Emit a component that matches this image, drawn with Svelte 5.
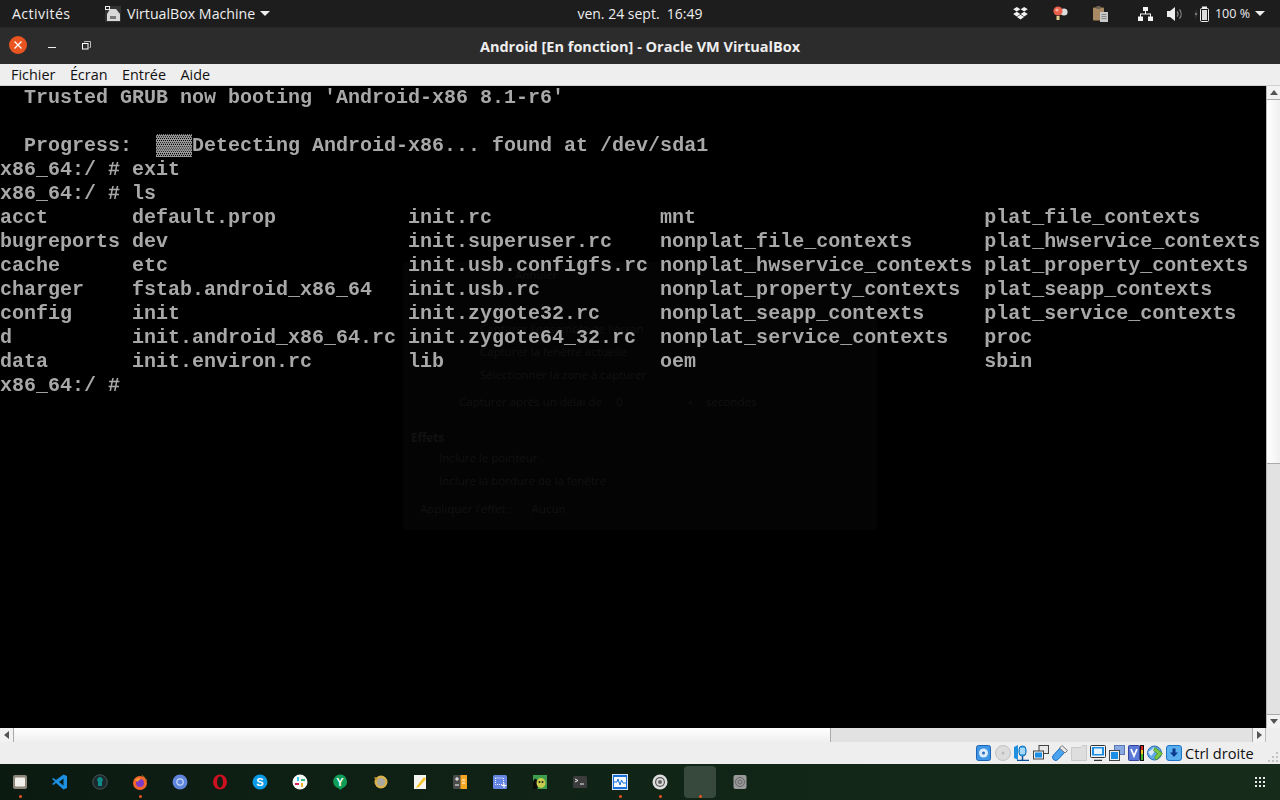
<script>
  const columns = [11, 34, 55, 82];
  const listing = [
    ["acct", "default.prop", "init.rc", "mnt", "plat_file_contexts"],
    ["bugreports", "dev", "init.superuser.rc", "nonplat_file_contexts", "plat_hwservice_contexts"],
    ["cache", "etc", "init.usb.configfs.rc", "nonplat_hwservice_contexts", "plat_property_contexts"],
    ["charger", "fstab.android_x86_64", "init.usb.rc", "nonplat_property_contexts", "plat_seapp_contexts"],
    ["config", "init", "init.zygote32.rc", "nonplat_seapp_contexts", "plat_service_contexts"],
    ["d", "init.android_x86_64.rc", "init.zygote64_32.rc", "nonplat_service_contexts", "proc"],
    ["data", "init.environ.rc", "lib", "oem", "sbin"],
  ];
  // ls pads to fixed columns on the 12px text grid
  const rows = listing.map((names) => {
    let out = "";
    names.forEach((name, i) => {
      out += i < columns.length ? name.padEnd(columns[i] - out.length) : name;
    });
    return out;
  });
  const menus = ["Fichier", "Écran", "Entrée", "Aide"];
</script>

<div class="screen">
  <header class="topbar">
    <div class="top-left">
      <span class="activities">Activités</span>
      <svg class="appicon" width="16" height="16" viewBox="0 0 16 16">
        <rect x="0" y="0" width="16" height="16" fill="#333" />
        <path d="M5 3h6l4 5v7H2V8z" fill="#d8d8d8" />
        <rect x="0" y="0" width="5" height="4" fill="#eee" />
        <rect x="1" y="1" width="3" height="2" fill="#222" />
        <rect x="5" y="10" width="6" height="3" fill="#777" />
      </svg>
      <span class="appname">VirtualBox Machine</span>
      <span class="caret"></span>
    </div>
    <div class="clock">ven. 24 sept.&nbsp;&nbsp;16:49</div>
    <div class="tray">
      <svg width="15" height="13" viewBox="0 0 15 13" fill="#f2f2f2">
        <path d="M3.8 0 7.4 2.3 3.8 4.6 0.2 2.3zM11.2 0l3.6 2.3-3.6 2.3-3.6-2.3zM3.8 4.8l3.6 2.3-3.6 2.3L.2 7.1zM11.2 4.8l3.6 2.3-3.6 2.3-3.6-2.3zM3.9 10l3.6-2.2 3.6 2.2-3.6 2.6z" />
      </svg>
      <svg class="t-bulb" width="15" height="16" viewBox="0 0 15 16">
        <circle cx="11" cy="6" r="3.6" fill="#ddd" />
        <circle cx="5" cy="5" r="4.6" fill="#e8604a" />
        <circle cx="4" cy="4" r="1.6" fill="#f5b09c" />
        <rect x="3.5" y="10" width="3" height="4" fill="#e3cf90" />
      </svg>
      <svg class="t-clip" width="15" height="16" viewBox="0 0 15 16">
        <rect x="0" y="1.5" width="11" height="13" rx="1" fill="#a98a62" />
        <rect x="3.5" y="0" width="4" height="3" fill="#6e6253" />
        <rect x="7" y="6" width="8" height="10" fill="#c8c8c8" />
        <path d="M8.5 8.5h5M8.5 10.5h5M8.5 12.5h5" stroke="#888" />
      </svg>
      <svg class="t-net" width="15" height="14" viewBox="0 0 15 14" fill="#f4f4f4">
        <rect x="5" y="0" width="5" height="4" />
        <rect x="0" y="9.5" width="5" height="4.5" />
        <rect x="10" y="9.5" width="5" height="4.5" />
        <path d="M7 4h1v2.500h5V10h-1V7.500H3V10H2V6.500h5z" />
      </svg>
      <svg class="t-vol" width="15" height="14" viewBox="0 0 15 14" fill="none">
        <path d="M0 4h3l5-4v14l-5-4H0z" fill="#eee" />
        <path d="M10 4.500a3.500 3.500 0 0 1 0 5M12.500 2.500a7 7 0 0 1 0 9" stroke="#888" stroke-width="1.200" />
      </svg>
      <svg class="t-bat" width="15" height="16" viewBox="0 0 15 16">
        <path d="M3 3 0.500 9h1.500L1 13l2.500-6H2z" fill="#777" />
        <rect x="6.500" y="2.500" width="8" height="13" rx="1" fill="none" stroke="#eee" />
        <rect x="8" y="0.500" width="5" height="2" fill="#eee" />
        <rect x="8" y="4" width="5" height="10" fill="#ddd" />
      </svg>
      <span class="pct">100 %</span>
      <span class="caret"></span>
    </div>
  </header>

  <div class="titlebar">
    <div class="winbtns">
      <span class="close">
        <svg width="10" height="10" viewBox="0 0 10 10"><path d="M1.500 1.500l7 7M8.500 1.500l-7 7" stroke="#fff" stroke-width="1.300" /></svg>
      </span>
      <span class="min"></span>
      <svg class="restore" width="9" height="9" viewBox="0 0 9 9" fill="none">
        <path d="M2.500 1.500V.500h6v6h-1" stroke="#bbb" />
        <rect x=".5" y="2.500" width="5.500" height="5.500" stroke="#fff" />
      </svg>
    </div>
    <div class="wintitle">Android [En fonction] - Oracle VM VirtualBox</div>
  </div>

  <nav class="menubar">
    {#each menus as m}
      <span>{m}</span>
    {/each}
  </nav>

  <div class="vm">
    <div class="vmrow">
      <div class="terminal">
        <div class="ghost">
          <div class="g-annuler">Annuler</div>
          <div class="g-opt">Capturer l'ensemble de l'écran</div>
          <div class="g-opt">Capturer la fenêtre actuelle</div>
          <div class="g-opt">Sélectionner la zone à capturer</div>
          <div class="g-delay"><span class="g-label">Capturer après un délai de</span><span class="g-zero">0</span><span class="g-plus">+</span><span>secondes</span></div>
          <div class="g-head">Effets</div>
          <div class="g-check">Inclure le pointeur</div>
          <div class="g-check">Inclure la bordure de la fenêtre</div>
          <div class="g-effect"><span>Appliquer l'effet :</span><span class="g-select">Aucun</span></div>
        </div>
        <pre class="term">  Trusted GRUB now booting 'Android-x86 8.1-r6'

  Progress:  <span class="shade">▓▓▓</span>Detecting Android-x86... found at /dev/sda1
x86_64:/ # exit
x86_64:/ # ls
{#each rows as row}{row}
{/each}x86_64:/ #</pre>
      </div>
      <div class="vscroll">
        <div class="sbtn"><span class="arrow up"></span></div>
        <div class="vthumb"></div>
        <div class="vtrack"></div>
        <div class="sbtn bottom"><span class="arrow down"></span></div>
      </div>
    </div>
    <div class="hscroll">
      <div class="hbtn"><span class="arrow left"></span></div>
      <div class="hthumb"></div>
      <div class="htrack"></div>
      <div class="hbtn rt"><span class="arrow right"></span></div>
      <div class="corner"></div>
    </div>
    <div class="status">
      <svg width="16" height="16" viewBox="0 0 16 16"><rect x=".5" y=".5" width="14" height="15" rx="2" fill="#3f96e6" stroke="#1e64b4" /><circle cx="7.500" cy="8" r="4.500" fill="#dcecfa" /><circle cx="7.500" cy="8" r="1.500" fill="#2a6fbe" /></svg>
      <svg width="16" height="16" viewBox="0 0 16 16"><circle cx="8" cy="8" r="7.500" fill="#dcdcdc" stroke="#c2c2c2" /><circle cx="8" cy="8" r="1.500" fill="#bbb" /></svg>
      <svg width="16" height="16" viewBox="0 0 16 16"><path d="M0 2l4-2v15l-4-2z" fill="#1f8fe0" /><rect x="5" y="1" width="7" height="10" rx="3.500" fill="#4fb0ee" stroke="#0b6cbc" /><path d="M6 4h5M6 6h5M6 8h5" stroke="#fff" /><path d="M3 15.500h12M8.500 11v4" stroke="#0b4f98" stroke-width="1.500" /></svg>
      <svg width="16" height="16" viewBox="0 0 16 16"><rect x="6" y=".5" width="9.500" height="8" fill="#e8e8e8" stroke="#444" /><rect x=".5" y="6" width="10" height="8" fill="#eee" stroke="#444" /><rect x="2" y="7.500" width="7" height="5" fill="#1b8ee6" /></svg>
      <svg width="16" height="16" viewBox="0 0 16 16"><path d="M9 2 1.500 10a3 3 0 0 0 4.500 4.500L13 7z" fill="#49a3ee" stroke="#1a6cc0" /><path d="M10 0.500 15.500 5.500 13 8 7.500 3z" fill="#e8e8e8" stroke="#777" /></svg>
      <svg width="16" height="16" viewBox="0 0 16 16"><path d="M.5 2.500h9l2-2h4v15H.5z" fill="#dedede" stroke="#cacaca" /></svg>
      <svg width="16" height="16" viewBox="0 0 16 16"><rect x=".5" y=".5" width="15" height="12" rx="1" fill="#f2f2f2" stroke="#333" /><rect x="2" y="2" width="12" height="8.500" fill="#1b8ee6" /><rect x="4" y="3.500" width="8" height="5.500" fill="#e6f3fd" /><path d="M4 15.500h8" stroke="#333" stroke-width="1.500" /></svg>
      <svg width="16" height="16" viewBox="0 0 16 16"><rect x="5.500" y=".5" width="10" height="9" fill="#8aa9e0" stroke="#5a78b8" /><rect x=".5" y="5.500" width="10" height="10" fill="#eee" stroke="#444" /><rect x="2" y="7" width="7" height="7" fill="#1b8ee6" /></svg>
      <svg width="16" height="16" viewBox="0 0 16 16"><rect x=".5" y=".5" width="11" height="15" rx="1" fill="#5a78d8" stroke="#33449a" /><path d="M3 4l3 7 3-7" fill="none" stroke="#fff" stroke-width="1.800" /><rect x="12" y="0" width="4" height="16" fill="#111" /><rect x="13" y="1" width="2" height="4" fill="#e0261c" /><rect x="13" y="5" width="2" height="4" fill="#f2c81c" /><rect x="13" y="9" width="2" height="6" fill="#46b82c" /></svg>
      <svg width="16" height="16" viewBox="0 0 16 16"><circle cx="7.500" cy="8" r="7" fill="#5fa8e8" stroke="#2b6cb4" /><path d="M1 7c3-2 5-3 6-5 2 3 0 6-3 9z" fill="#d5e7f8" /><path d="M8 2.500l7.500 6-6 6.500-2-2.500 3-4-4-3z" fill="#7ac843" stroke="#4b8f22" stroke-width=".8" /></svg>
      <svg width="16" height="16" viewBox="0 0 16 16"><rect x=".5" y=".5" width="15" height="15" rx="2.500" fill="#5ab0ef" stroke="#1f74c4" /><path d="M6.500 3.500h3v4h2.500L8 12 4 7.500h2.500z" fill="#0c3a8c" /></svg>
      <span class="hostkey">Ctrl droite</span>
      <svg class="grip" width="12" height="12" viewBox="0 0 12 12" fill="#c2c2c2"><rect x="9" y="1" width="2" height="2" /><rect x="5" y="5" width="2" height="2" /><rect x="9" y="5" width="2" height="2" /><rect x="1" y="9" width="2" height="2" /><rect x="5" y="9" width="2" height="2" /><rect x="9" y="9" width="2" height="2" /></svg>
    </div>
  </div>

  <footer class="dock">
    <div class="dockitem running">
      <svg width="16" height="16" viewBox="0 0 16 16"><rect x="1" y="1" width="14" height="14" rx="2" fill="#8d8779" /><rect x="3" y="3.500" width="10" height="9" rx="1" fill="#f1f0eb" /></svg>
    </div>
    <div class="dockitem">
      <svg width="16" height="16" viewBox="0 0 16 16"><path d="M11.500 .500 15 2v12l-3.500 1.500L4 9l-2.500 2L0 10l3-2.500L0 5l1.500-1 2.500 2zM11.500 4.500 7 8l4.500 3.500z" fill="#1d8fe0" /></svg>
    </div>
    <div class="dockitem">
      <svg width="16" height="16" viewBox="0 0 16 16"><circle cx="8" cy="8" r="7.200" fill="#1a2a2c" stroke="#4a5658" /><path d="M8 3a2.800 2.800 0 0 1 2 4.800V12H6V7.800A2.800 2.800 0 0 1 8 3z" fill="#0f8a86" /></svg>
    </div>
    <div class="dockitem running">
      <svg width="16" height="16" viewBox="0 0 16 16"><circle cx="8" cy="9" r="7" fill="#f5652b" /><path d="M9 .500c3 1.500 5 3.500 6 7 0-2-1-3-2-3.500z" fill="#ffc02f" /><circle cx="8" cy="9" r="4" fill="#7b3bc7" /><path d="M3 6c2-2 5-2 6-1-1 1-3 1-3 3z" fill="#ff9a2a" /></svg>
    </div>
    <div class="dockitem">
      <svg width="16" height="16" viewBox="0 0 16 16"><circle cx="8" cy="8" r="7.500" fill="#5f86dc" /><circle cx="8" cy="8" r="3.200" fill="none" stroke="#c9d9f7" stroke-width="1.200" /></svg>
    </div>
    <div class="dockitem">
      <svg width="16" height="16" viewBox="0 0 16 16"><ellipse cx="8" cy="8" rx="7" ry="7.500" fill="#cf1020" /><ellipse cx="8" cy="8" rx="3" ry="5.800" fill="#111f14" /></svg>
    </div>
    <div class="dockitem">
      <svg width="16" height="16" viewBox="0 0 16 16"><circle cx="8" cy="8" r="7.500" fill="#0a9ae6" /><text x="8" y="12" class="dockglyph">S</text></svg>
    </div>
    <div class="dockitem">
      <svg width="16" height="16" viewBox="0 0 16 16"><circle cx="8" cy="8" r="7.500" fill="#f8f8f8" /><path d="M6 3v4" stroke="#36c5f0" stroke-width="2" /><path d="M10 9v4" stroke="#ecb22e" stroke-width="2" /><path d="M3 10h4" stroke="#e01e5a" stroke-width="2" /><path d="M9 6h4" stroke="#2eb67d" stroke-width="2" /></svg>
    </div>
    <div class="dockitem">
      <svg width="16" height="16" viewBox="0 0 16 16"><path d="M8 .500a7 7 0 0 1 3.500 13L8 16l-1-1.600A7 7 0 0 1 8 .500z" fill="#109d58" /><text x="8" y="11.500" class="dockglyph">Y</text></svg>
    </div>
    <div class="dockitem">
      <svg width="16" height="16" viewBox="0 0 16 16"><circle cx="9" cy="8" r="6.500" fill="#d9b24c" /><circle cx="9" cy="8" r="4" fill="#a9a9a0" /><path d="M2 3l4 1-2 3z" fill="#c79a2c" /></svg>
    </div>
    <div class="dockitem">
      <svg width="16" height="16" viewBox="0 0 16 16"><rect x="2" y="1" width="12" height="14" fill="#f4f4f0" /><path d="M5 12 12 3l2 2-7 8-3 1z" fill="#f3c62a" /></svg>
    </div>
    <div class="dockitem">
      <svg width="16" height="16" viewBox="0 0 16 16"><rect x="1" y="1" width="14" height="14" rx="1.500" fill="#4b4b4b" /><rect x="8.500" y="1" width="6.500" height="14" fill="#f5a623" /><path d="M3 5h4M5 3v4M3 11h4M10 6h3M10 9h3" stroke="#fff" /></svg>
    </div>
    <div class="dockitem">
      <svg width="16" height="16" viewBox="0 0 16 16"><rect x="1" y="1" width="14" height="14" rx="1.500" fill="#6486e2" /><rect x="3.500" y="4" width="8" height="6.500" fill="none" stroke="#fff" stroke-dasharray="1 1" /><path d="M12 9v5M9.500 11.500h5" stroke="#fff" /></svg>
    </div>
    <div class="dockitem">
      <svg width="16" height="16" viewBox="0 0 16 16"><rect x="1" y="1" width="14" height="14" fill="#3f9e4d" /><path d="M1 15V8c1-4 3-4 4-2s1 9 0 9z" fill="#0c0c0c" /><ellipse cx="9" cy="9" rx="4.500" ry="5" fill="#c7cc4c" /><circle cx="7.500" cy="8" r="1" fill="#222" /><circle cx="10.500" cy="8" r="1" fill="#222" /></svg>
    </div>
    <div class="dockitem">
      <svg width="16" height="16" viewBox="0 0 16 16"><rect x="1" y="2" width="14" height="12" rx="1.500" fill="#3c3c3c" /><path d="M3 5l3 1.500L3 8M8 10h4" stroke="#eee" fill="none" /></svg>
    </div>
    <div class="dockitem running">
      <svg width="16" height="16" viewBox="0 0 16 16"><rect x=".5" y=".5" width="15" height="15" fill="#1670d8" stroke="#cfe0f8" /><rect x="2" y="3" width="12" height="10" fill="#f4f8fe" /><path d="M2 8h3l1-3 2 6 1.500-5L11 9h3" fill="none" stroke="#1670d8" /></svg>
    </div>
    <div class="dockitem running">
      <svg width="16" height="16" viewBox="0 0 16 16"><circle cx="8" cy="8" r="7.500" fill="#dedede" /><circle cx="8" cy="8" r="5" fill="#555" /><circle cx="8" cy="8" r="3.800" fill="#ddd" /><circle cx="8" cy="8" r="2" fill="#666" /></svg>
    </div>
    <div class="dockitem running active"></div>
    <div class="dockitem">
      <svg width="16" height="16" viewBox="0 0 16 16"><rect x="1.500" y="1" width="13" height="14" rx="2" fill="#9a9a9a" /><circle cx="8" cy="8" r="4.500" fill="none" stroke="#666" /><circle cx="8" cy="8" r="2" fill="none" stroke="#666" /></svg>
    </div>
    <div class="apps">
      <svg width="10" height="10" viewBox="0 0 10 10" fill="#e8e8e8"><rect width="2" height="2" /><rect x="4" width="2" height="2" /><rect x="8" width="2" height="2" /><rect y="4" width="2" height="2" /><rect x="4" y="4" width="2" height="2" /><rect x="8" y="4" width="2" height="2" /><rect y="8" width="2" height="2" /><rect x="4" y="8" width="2" height="2" /><rect x="8" y="8" width="2" height="2" /></svg>
    </div>
  </footer>
</div>

<style>
  :global(body) {
    margin: 0;
    background: #000;
  }
  .screen {
    width: 1280px;
    height: 800px;
    display: flex;
    flex-direction: column;
    overflow: hidden;
    font-family: "Open Sans", "Noto Sans", sans-serif;
  }

  /* gnome top bar */
  .topbar {
    height: 27px;
    flex: none;
    background: #1d1d1d;
    color: #eee;
    font-size: 14.2px;
    display: grid;
    grid-template-columns: 1fr auto 1fr;
    align-items: center;
  }
  .top-left {
    display: flex;
    align-items: center;
    padding-left: 12px;
  }
  .activities {
    width: 93px;
    letter-spacing: 0.4px;
  }
  .appname {
    margin-left: 6px;
  }
  .appicon {
    flex: none;
  }
  .caret {
    width: 0;
    height: 0;
    margin-left: 5px;
    border-left: 5px solid transparent;
    border-right: 5px solid transparent;
    border-top: 5px solid #eee;
  }
  .clock {
    font-size: 14px;
  }
  .tray {
    display: flex;
    align-items: center;
    justify-content: flex-end;
    padding-right: 15px;
  }
  .tray svg {
    flex: none;
  }
  .t-bulb,
  .t-clip {
    margin-left: 25px;
  }
  .t-net {
    margin-left: 30px;
  }
  .t-vol {
    margin-left: 14px;
  }
  .t-bat {
    margin-left: 12px;
  }
  .pct {
    font-size: 12.5px;
    margin-left: 6px;
  }

  /* window decoration */
  .titlebar {
    height: 37px;
    flex: none;
    background: #2c2c2c;
    position: relative;
    display: flex;
    align-items: center;
    justify-content: center;
    border-top: 1px solid #262626;
    box-sizing: border-box;
  }
  .wintitle {
    color: #eee;
    font-weight: 700;
    font-size: 14.5px;
  }
  .winbtns {
    position: absolute;
    left: 9px;
    top: 8px;
    display: flex;
    align-items: center;
  }
  .close {
    width: 18px;
    height: 18px;
    border-radius: 50%;
    background: #e95420;
    display: flex;
    align-items: center;
    justify-content: center;
  }
  .min {
    width: 8px;
    height: 1px;
    background: #eee;
    margin-left: 21px;
    margin-top: 4px;
  }
  .restore {
    margin-left: 26px;
  }

  .menubar {
    height: 22px;
    flex: none;
    box-sizing: border-box;
    background: #eee;
    border-bottom: 1px solid #d0d0d0;
    display: flex;
    align-items: center;
    gap: 14.5px;
    padding-left: 11px;
    font-size: 14.4px;
    color: #111;
  }

  .vm {
    flex: 1;
    display: flex;
    flex-direction: column;
    min-height: 0;
  }
  .vmrow {
    flex: 1;
    display: flex;
    min-height: 0;
  }
  .terminal {
    flex: 1;
    background: #000;
    position: relative;
    overflow: hidden;
  }
  .term {
    position: relative;
    margin: 0;
    font-family: "Liberation Mono", monospace;
    font-weight: 700;
    font-size: 20px;
    line-height: 24px;
    color: #a8a8a8;
    filter: blur(0.4px);
  }
  .shade {
    color: #999;
  }

  /* leftover of the screenshot dialog fading out behind the vm */
  .ghost {
    position: absolute;
    left: 403px;
    top: 176px;
    width: 474px;
    height: 268px;
    box-sizing: border-box;
    background: #040404;
    color: #111;
    font-size: 11.5px;
    line-height: 16px;
  }
  .g-annuler {
    margin: 5px 0 0 112px;
  }
  .g-opt {
    margin: 0 0 7px 77px;
  }
  .g-annuler + .g-opt {
    margin-top: 38px;
  }
  .g-delay {
    display: flex;
    margin: 11px 0 0 56px;
  }
  .g-label {
    width: 157px;
  }
  .g-zero {
    width: 71px;
  }
  .g-plus {
    width: 19px;
  }
  .g-head {
    margin: 20px 0 4px 8px;
    font-weight: 700;
  }
  .g-check {
    margin: 0 0 7px 36px;
  }
  .g-effect {
    display: flex;
    margin: 12px 0 0 17px;
  }
  .g-select {
    margin-left: 20px;
  }

  /* scrollbars */
  .vscroll {
    width: 14px;
    flex: none;
    display: flex;
    flex-direction: column;
    border-left: 1px solid #bbb;
    box-sizing: border-box;
    background: #e2e2e2;
  }
  .sbtn {
    height: 14px;
    flex: none;
    background: #f2f2f2;
    border-bottom: 1px solid #aaa;
    display: flex;
    align-items: center;
    justify-content: center;
    box-sizing: border-box;
  }
  .sbtn.bottom {
    border-bottom: 0;
    border-top: 1px solid #aaa;
  }
  .vthumb {
    height: 364px;
    flex: none;
    background: linear-gradient(90deg, #fff, #f0f0f0);
    border-bottom: 1px solid #aaa;
    box-sizing: border-box;
  }
  .vtrack {
    flex: 1;
  }
  .hscroll {
    height: 14px;
    flex: none;
    display: flex;
    background: #e2e2e2;
  }
  .hbtn {
    width: 13px;
    flex: none;
    background: #f2f2f2;
    border-right: 1px solid #aaa;
    display: flex;
    align-items: center;
    justify-content: center;
  }
  .hbtn.rt {
    width: 14px;
    box-sizing: border-box;
    border-right: 1px solid #bbb;
    border-left: 1px solid #aaa;
  }
  .hthumb {
    width: 817px;
    flex: none;
    background: linear-gradient(#fff, #eee);
    border-right: 1px solid #aaa;
    box-sizing: border-box;
  }
  .htrack {
    flex: 1;
  }
  .corner {
    width: 14px;
    flex: none;
    background: #eee;
  }
  .arrow {
    width: 0;
    height: 0;
    border: 4px solid transparent;
  }
  .arrow.up {
    border-bottom: 5px solid #555;
    border-top: 0;
  }
  .arrow.down {
    border-top: 5px solid #555;
    border-bottom: 0;
  }
  .arrow.left {
    border-right: 5px solid #555;
    border-left: 0;
  }
  .arrow.right {
    border-left: 5px solid #555;
    border-right: 0;
  }

  .status {
    height: 22px;
    flex: none;
    background: #eee;
    display: flex;
    align-items: center;
    gap: 3px;
    padding-left: 976px;
    position: relative;
    box-sizing: border-box;
  }
  .status svg {
    flex: none;
  }
  .hostkey {
    font-size: 14.6px;
    color: #111;
    white-space: nowrap;
  }
  .grip {
    position: absolute;
    right: 1px;
    bottom: 1px;
  }

  /* ubuntu dock */
  .dock {
    height: 36px;
    flex: none;
    display: flex;
    align-items: center;
    background:
      linear-gradient(90deg, rgba(8, 20, 14, 0.7), rgba(12, 30, 18, 0.4) 50%, rgba(30, 50, 28, 0.3)),
      #14291a;
  }
  .dockitem {
    width: 40px;
    height: 36px;
    flex: none;
    display: flex;
    align-items: center;
    justify-content: center;
    position: relative;
  }
  .dockitem.running::after {
    content: "";
    position: absolute;
    left: 19px;
    bottom: 2px;
    width: 3px;
    height: 3px;
    border-radius: 50%;
    background: #e95420;
  }
  .active::before {
    content: "";
    position: absolute;
    left: 4px;
    top: 2px;
    width: 32px;
    height: 32px;
    border-radius: 4px;
    background: rgba(255, 255, 255, 0.16);
  }
  .dockglyph {
    fill: #fff;
    font-family: "Liberation Sans", sans-serif;
    font-weight: 700;
    font-size: 11px;
    text-anchor: middle;
  }
  .apps {
    margin-left: auto;
    margin-right: 15px;
    display: flex;
  }
</style>
